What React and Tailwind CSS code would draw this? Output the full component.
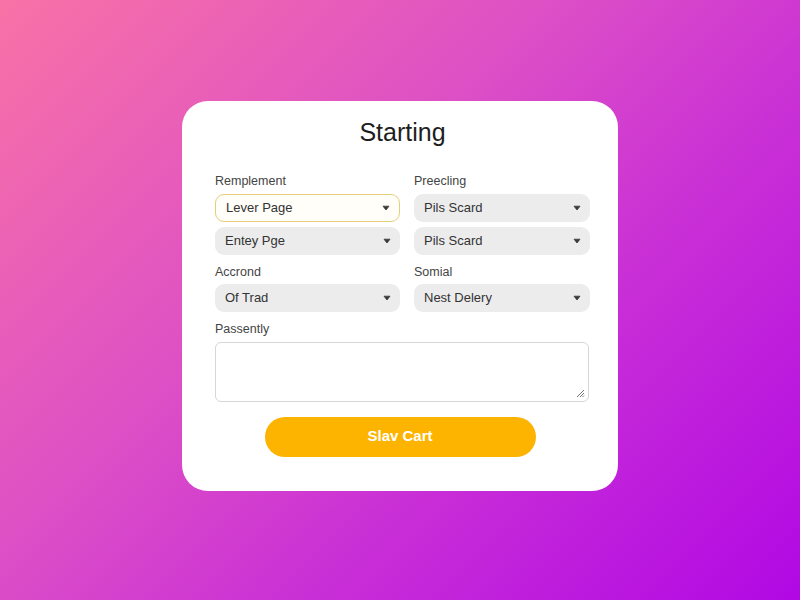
import React from "react";

function Chevron() {
  return (
    <svg width="8" height="6" viewBox="0 0 8 6" className="shrink-0">
      <path d="M1 1.2 L7 1.2 L4 5 Z" fill="#3a3a3a" stroke="#3a3a3a" strokeWidth="0.8" strokeLinejoin="round" />
    </svg>
  );
}

function Select({ text, active }) {
  return (
    <div
      className={
        "flex h-[28px] items-center justify-between rounded-[9px] pl-[10px] pr-[9px] text-[13px] text-[#333] " +
        (active ? "border border-[#e6cf7a] bg-[#fffef8]" : "bg-[#ececec]")
      }
    >
      <span>{text}</span>
      <Chevron />
    </div>
  );
}

function Label({ children }) {
  return <div className="text-[12.5px] leading-none text-[#444]">{children}</div>;
}

export default function App() {
  return (
    <div
      className="flex h-[600px] w-[800px] items-start justify-center bg-[linear-gradient(135deg,#f972a6_0%,#dc4fc6_40%,#c92fd6_65%,#b108e4_100%)] pt-[101px]"
      style={{ fontFamily: '"Liberation Sans", Arial, sans-serif' }}
    >
      <div className="flex h-[390px] w-[436px] flex-col rounded-[26px] bg-white pl-[33px] pr-[28px] pt-[17px]">
        <h1 className="text-center text-[25px] leading-[28px] text-[#1e1e1e]">Starting</h1>
        <div className="mt-[29px] grid grid-cols-[185px_176px] gap-x-[14px]">
          <div className="flex flex-col">
            <Label>Remplement</Label>
            <div className="mt-[6px] flex flex-col gap-[5px]">
              <Select text="Lever Page" active />
              <Select text="Entey Pge" />
            </div>
          </div>
          <div className="flex flex-col">
            <Label>Preecling</Label>
            <div className="mt-[6px] flex flex-col gap-[5px]">
              <Select text="Pils Scard" />
              <Select text="Pils Scard" />
            </div>
          </div>
          <div className="mt-[11px] flex flex-col">
            <Label>Accrond</Label>
            <div className="mt-[6px]">
              <Select text="Of Trad" />
            </div>
          </div>
          <div className="mt-[11px] flex flex-col">
            <Label>Somial</Label>
            <div className="mt-[6px]">
              <Select text="Nest Delery" />
            </div>
          </div>
        </div>
        <div className="mt-[11px]">
          <Label>Passently</Label>
        </div>
        <div className="relative mt-[6px] h-[60px] w-[374px] rounded-[6px] border border-[#d6d6d6] bg-white">
          <svg width="10" height="10" viewBox="0 0 10 10" className="absolute bottom-[3px] right-[3px]">
            <path d="M9 2 L2 9 M9 5 L5 9 M9 7.5 L7.5 9" stroke="#777" strokeWidth="1" />
          </svg>
        </div>
        <div className="mt-[15px] flex justify-center pr-[5px]">
          <button className="h-[40px] w-[271px] rounded-full bg-[#fdb400] text-[15px] font-semibold text-white">
            Slav Cart
          </button>
        </div>
      </div>
    </div>
  );
}
